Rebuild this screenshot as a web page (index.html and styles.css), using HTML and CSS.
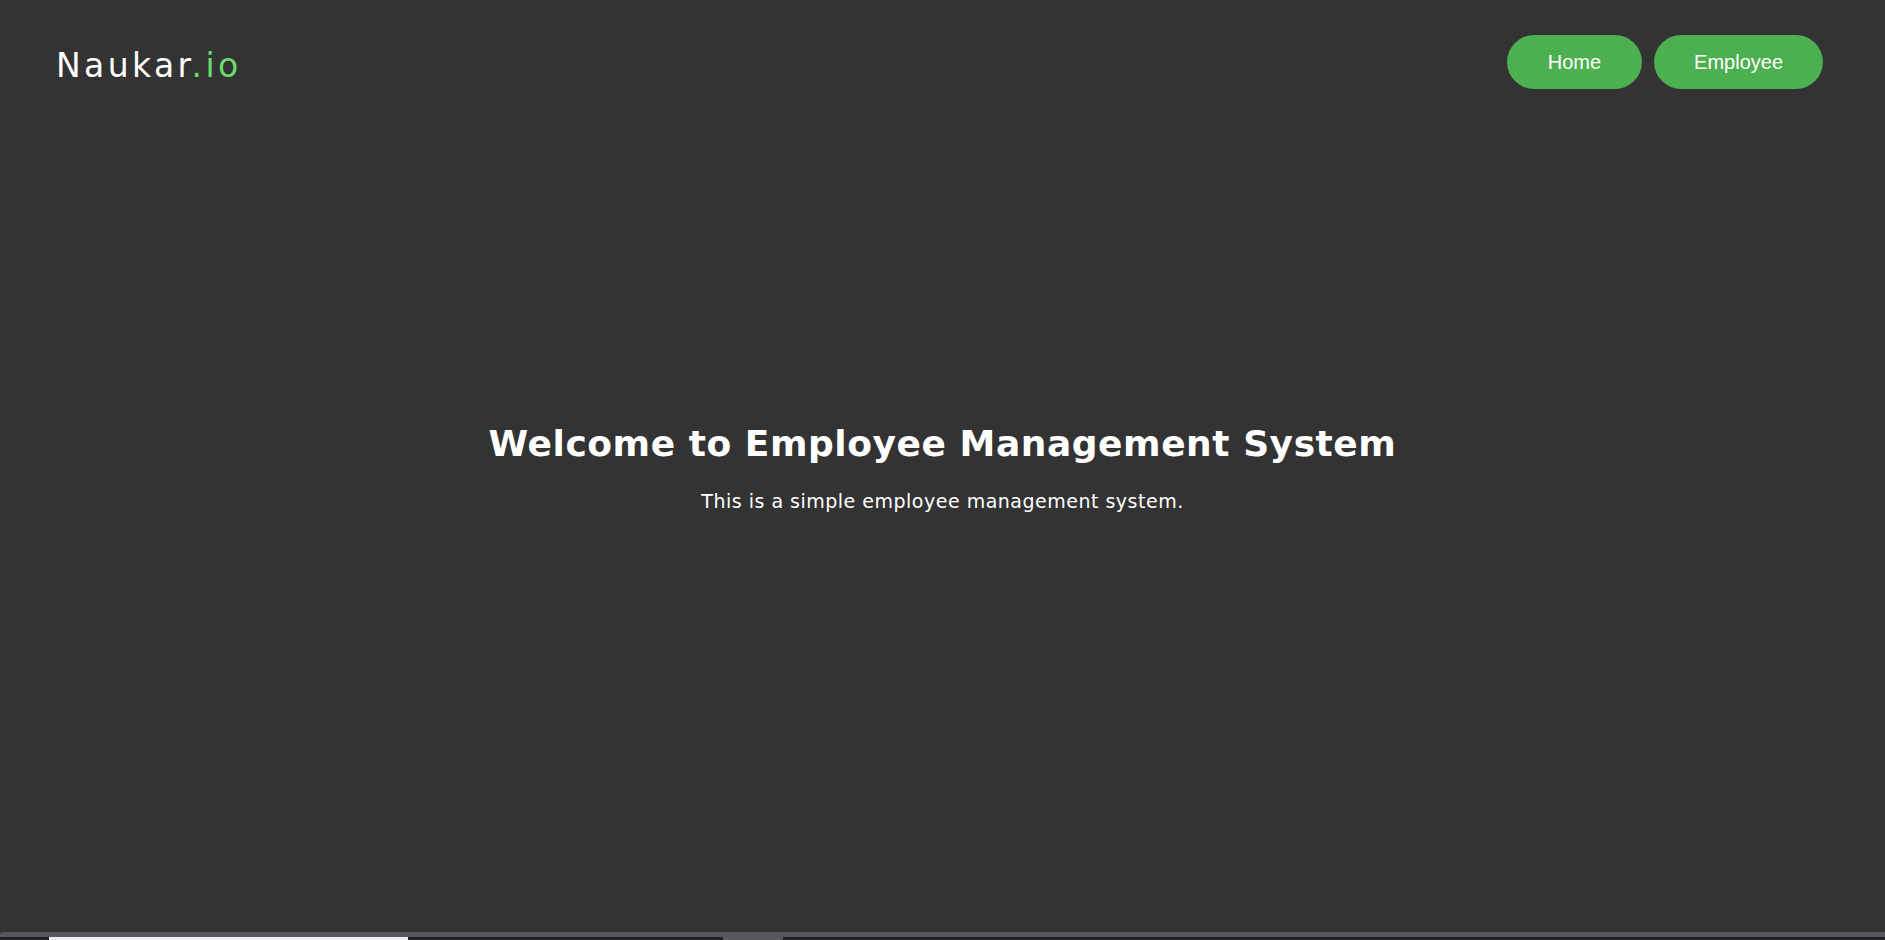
FILE: index.html
```html
<!DOCTYPE html>
<html lang="en">
<head>
<meta charset="utf-8">
<title>Naukar.io</title>
<link rel="stylesheet" href="styles.css">
</head>
<body>
<div class="page">
  <header class="topbar">
    <div class="logo">Naukar<span class="logo-accent">.io</span></div>
    <nav class="nav">
      <a class="nav-btn nav-home" href="#">Home</a>
      <a class="nav-btn" href="#">Employee</a>
    </nav>
  </header>
  <main class="hero">
    <h1 class="hero-title">Welcome to Employee Management System</h1>
    <p class="hero-text">This is a simple employee management system.</p>
  </main>
  <div class="strip">
    <div class="strip-line"></div>
    <div class="strip-bar">
      <span class="strip-tab"></span>
      <span class="strip-thumb"></span>
    </div>
  </div>
</div>
</body>
</html>
```
FILE: styles.css
```css
* { box-sizing: border-box; }
html, body { margin: 0; padding: 0; }
body {
  background: #333333;
  color: #ffffff;
  font-family: "DejaVu Sans", "Open Sans", sans-serif;
}
.page {
  height: 100vh;
  display: grid;
  grid-template-rows: 1fr auto;
  grid-template-columns: 1fr;
}
.topbar {
  grid-row: 1;
  grid-column: 1;
  align-self: start;
  display: flex;
  justify-content: space-between;
  align-items: flex-start;
  padding: 35px 62px 0 56px;
  z-index: 1;
}
.logo {
  font-size: 33px;
  font-weight: 400;
  letter-spacing: 3.4px;
  line-height: 54px;
  margin-top: 4px;
}
.logo-accent { color: #6bdc6b; }
.nav { display: flex; gap: 12px; }
.nav-btn {
  display: block;
  background: #4caf50;
  color: #ffffff;
  text-decoration: none;
  font-family: "Liberation Sans", Arial, sans-serif;
  font-size: 20px;
  line-height: 24px;
  padding: 15px 40px;
  border-radius: 30px;
}
.nav-home { padding: 15px 41px; }
.hero {
  grid-row: 1;
  grid-column: 1;
  display: flex;
  flex-direction: column;
  justify-content: center;
  align-items: center;
  text-align: center;
  padding-top: 4px;
}
.hero-title {
  margin: 0;
  font-size: 36px;
  font-weight: 700;
  letter-spacing: 0.55px;
  line-height: 44px;
}
.hero-text {
  margin: 22px 0 0;
  font-size: 19px;
  letter-spacing: 0.5px;
  line-height: 26px;
}
.strip { grid-row: 2; }
.strip-line {
  height: 5px;
  background: #55555b;
  border-top-left-radius: 3px;
}
.strip-bar {
  height: 3px;
  background: #202124;
  display: flex;
}
.strip-tab {
  margin-left: 49px;
  width: 359px;
  background: #eeeeee;
}
.strip-thumb {
  margin-left: 315px;
  width: 60px;
  background: #5a5a60;
}
```
